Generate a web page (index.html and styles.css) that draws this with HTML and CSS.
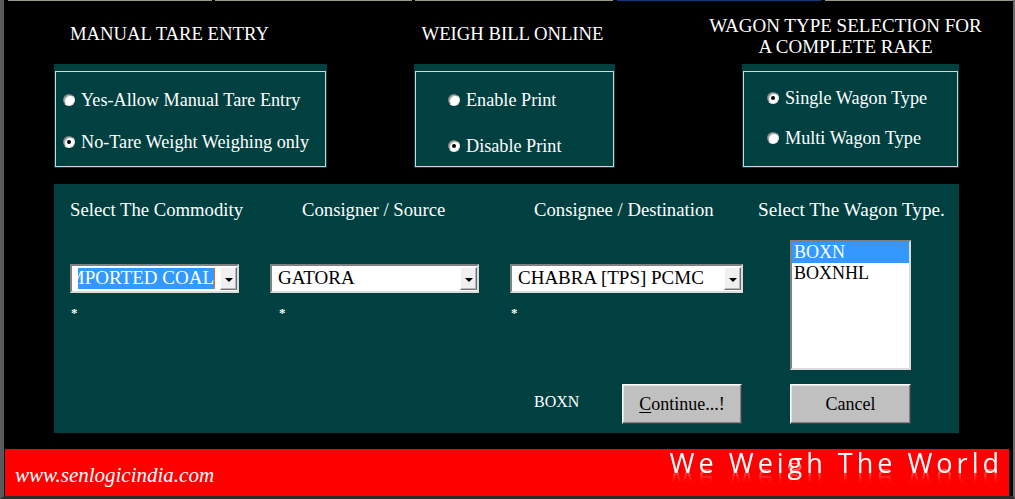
FILE: index.html
```html
<!DOCTYPE html>
<html>
<head>
<meta charset="utf-8">
<title>Weigh Bridge Settings</title>
<link rel="stylesheet" href="styles.css">
</head>
<body>
<div class="frame">
  <div class="tabs">
    <span class="tab t1"></span>
    <span class="tab t2"></span>
    <span class="tab t3"></span>
    <span class="tab t4 active"></span>
    <span class="tab t5"></span>
  </div>

  <div class="top">
    <section class="col c1">
      <h2 class="head single">MANUAL TARE ENTRY</h2>
      <div class="box">
        <div class="inner in1">
          <div class="opt"><span class="radio"></span><span>Yes-Allow Manual Tare Entry</span></div>
          <div class="opt"><span class="radio on"></span><span>No-Tare Weight Weighing only</span></div>
        </div>
      </div>
    </section>
    <section class="col c2">
      <h2 class="head single">WEIGH BILL ONLINE</h2>
      <div class="box">
        <div class="inner in2">
          <div class="opt"><span class="radio"></span><span>Enable Print</span></div>
          <div class="opt"><span class="radio on"></span><span>Disable Print</span></div>
        </div>
      </div>
    </section>
    <section class="col c3">
      <h2 class="head wide">WAGON TYPE SELECTION FOR<br>A COMPLETE RAKE</h2>
      <div class="box">
        <div class="inner in3">
          <div class="opt"><span class="radio on"></span><span>Single Wagon Type</span></div>
          <div class="opt"><span class="radio"></span><span>Multi Wagon Type</span></div>
        </div>
      </div>
    </section>
  </div>

  <div class="panel">
    <div class="pcol p1">
      <div class="label">Select The Commodity</div>
      <div class="combo w1">
        <div class="value sel"><span>IMPORTED COAL</span></div>
        <span class="drop"><span class="arrow"></span></span>
      </div>
      <div class="star">*</div>
    </div>
    <div class="pcol p2">
      <div class="label">Consigner / Source</div>
      <div class="combo w2">
        <div class="value"><span>GATORA</span></div>
        <span class="drop"><span class="arrow"></span></span>
      </div>
      <div class="star">*</div>
    </div>
    <div class="pcol p3">
      <div class="label">Consignee / Destination</div>
      <div class="combo w3">
        <div class="value"><span>CHABRA [TPS] PCMC</span></div>
        <span class="drop"><span class="arrow"></span></span>
      </div>
      <div class="star">*</div>
      <div class="actions">
        <span class="picked">BOXN</span>
        <button class="btn" type="button"><u>C</u>ontinue...!</button>
      </div>
    </div>
    <div class="pcol p4">
      <div class="label">Select The Wagon Type.</div>
      <div class="listbox">
        <div class="item chosen">BOXN</div>
        <div class="item">BOXNHL</div>
      </div>
      <button class="btn cancel" type="button">Cancel</button>
    </div>
  </div>

  <div class="footer">
    <span class="site">www.senlogicindia.com</span>
    <span class="slogan">We Weigh The World</span>
  </div>
</div>
</body>
</html>
```

FILE: styles.css
```css
* { box-sizing: border-box; }

html, body {
  margin: 0;
  padding: 0;
  background: #000;
}

body {
  width: 1015px;
  height: 499px;
  overflow: hidden;
  font-family: "Liberation Serif", "Times New Roman", serif;
  color: #fff;
}

.frame {
  height: 499px;
  border-left: 4px solid #5a5a5a;
  border-right: 2px solid #6a6a6a;
  border-bottom: 3px solid #2c2c2c;
  display: flex;
  flex-direction: column;
}

/* top strip of tab lines */
.tabs {
  display: flex;
  height: 1px;
  padding-left: 4px;
  gap: 3px;
}
.tab { display: block; height: 1px; background: #9a9a88; }
.t1 { width: 205px; }
.t2 { width: 198px; }
.t3 { width: 198px; }
.t4 { width: 205px; margin-left: 1px; }
.t5 { width: 189px; margin-left: 1px; }
.tab.active { background: #0b3c7a; }

/* top option groups */
.top {
  display: flex;
  padding: 14px 0 0 50px;
}
.col { display: flex; flex-direction: column; }
.c1 { width: 273px; margin-right: 87px; }
.c2 { width: 201px; margin-right: 127px; }
.c3 { width: 217px; }

.head {
  margin: 0;
  height: 49px;
  font-size: 18.7px;
  line-height: 21px;
  font-weight: normal;
  white-space: nowrap;
}
.head.single { padding-top: 8px; }
.c1 .head { padding-left: 16px; }
.c2 .head { text-align: center; padding-right: 4px; }
.head.wide { text-align: center; margin: 0 -40px 0 -50px; font-size: 19px; }

.box {
  height: 104px;
  background: #004040;
  padding: 7px 1px 1px 1px;
}
.inner {
  height: 100%;
  border: 1px solid #d4d4d4;
  display: flex;
  flex-direction: column;
}
.in1 { padding: 17px 0 0 7px; gap: 20px; }
.in2 { padding: 17px 0 0 32px; gap: 24px; }
.in3 { padding: 15px 0 0 23px; gap: 18px; }

.opt {
  display: flex;
  align-items: center;
  gap: 6px;
  height: 22px;
  font-size: 18.2px;
  line-height: 22px;
  white-space: nowrap;
}

.radio {
  width: 12px;
  height: 12px;
  flex: none;
  border-radius: 50%;
  background: #fff;
  border: 1px solid;
  border-color: #7a7a7a #e8e8e8 #e8e8e8 #7a7a7a;
  box-shadow: inset 1px 1px 0 #a0a0a0;
  display: flex;
  align-items: center;
  justify-content: center;
}
.radio.on::after {
  content: "";
  width: 4px;
  height: 4px;
  border-radius: 50%;
  background: #000;
}

/* main panel */
.panel {
  margin: 16px 0 0 50px;
  width: 905px;
  background: #004040;
  padding: 15px 0 9px 16px;
  display: grid;
  grid-template-columns: 200px 240px 248px 1fr;
}
.pcol { display: flex; flex-direction: column; align-items: flex-start; }

.label {
  font-size: 18.7px;
  line-height: 22px;
  height: 22px;
  white-space: nowrap;
}
.p2 .label { padding-left: 32px; }
.p3 .label { padding-left: 24px; }
.p4 .label { font-size: 19.2px; }

.combo {
  margin-top: 43px;
  height: 29px;
  background: #fff;
  border: 2px solid;
  border-color: #808080 #dcdcdc #dcdcdc #808080;
  display: flex;
  align-items: stretch;
  color: #000;
}
.w1 { width: 169px; }
.w2 { width: 209px; }
.w3 { width: 233px; }

.value {
  flex: 1;
  display: flex;
  align-items: center;
  padding: 0 0 2px 6px;
  font-size: 19px;
  white-space: nowrap;
  overflow: hidden;
}
.value.sel { padding: 0 4px 0 6px; }
.value.sel span {
  display: flex;
  justify-content: flex-end;
  width: 137px;
  height: 21px;
  line-height: 20px;
  overflow: hidden;
  background: #3399ff;
  color: #fff;
  border-right: 1px solid #e07020;
}

.drop {
  width: 17px;
  margin: 1px 0;
  background: #f0f0f0;
  border: 1px solid;
  border-color: #fff #707070 #707070 #fff;
  box-shadow: inset -1px -1px 0 #b8b8b8;
  display: flex;
  align-items: center;
  justify-content: center;
  padding-top: 2px;
}
.arrow {
  width: 0;
  height: 0;
  border-left: 4px solid transparent;
  border-right: 4px solid transparent;
  border-top: 4px solid #000;
}

.star {
  margin-top: 14px;
  font-size: 13px;
  line-height: 12px;
  font-weight: bold;
  padding-left: 1px;
}
.p2 .star { padding-left: 9px; }

.actions {
  margin-top: auto;
  display: flex;
  align-items: center;
  padding-left: 24px;
}
.picked {
  width: 88px;
  font-size: 16px;
  margin-bottom: 4px;
}

.btn {
  width: 120px;
  height: 40px;
  background: #c0c0c0;
  border: 1px solid;
  border-color: #fff #404040 #404040 #fff;
  box-shadow: inset -1px -1px 0 #808080, inset 1px 1px 0 #e4e4e4;
  font-family: "Liberation Serif", "Times New Roman", serif;
  font-size: 18px;
  color: #000;
  padding: 0;
}
.btn u { text-decoration-thickness: 1px; text-underline-offset: 2px; }

.listbox {
  margin: 19px 0 0 32px;
  width: 121px;
  height: 130px;
  background: #fff;
  border: 2px solid;
  border-color: #808080 #dcdcdc #dcdcdc #808080;
  color: #000;
  font-size: 18px;
}
.item {
  height: 21px;
  line-height: 21px;
  padding-left: 2px;
}
.item.chosen { background: #3399ff; color: #fff; }

.cancel {
  margin: 14px 0 0 32px;
  width: 121px;
}

/* footer */
.footer {
  margin: 16px 4px 0 1px;
  height: 47px;
  background: #ff0000;
  display: flex;
  justify-content: space-between;
  align-items: flex-start;
  overflow: hidden;
}
.site {
  margin: 14px 0 0 10px;
  font-style: italic;
  font-size: 21px;
  line-height: 24px;
}
.slogan {
  margin: -2px 6px 0 0;
  font-family: "Open Sans", "DejaVu Sans", sans-serif;
  font-size: 27px;
  line-height: 32px;
  letter-spacing: 4px;
  white-space: nowrap;
  -webkit-box-reflect: below -16px linear-gradient(to bottom, transparent 40%, rgba(255,255,255,0.55));
}
```
